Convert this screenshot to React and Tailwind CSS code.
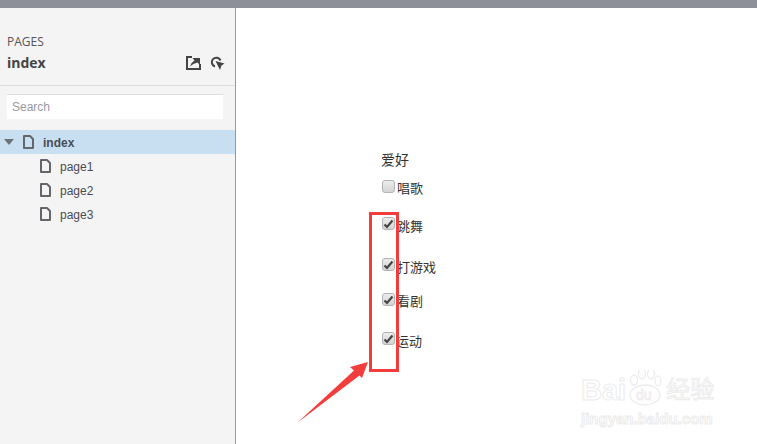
import React from 'react';

const pages = ['page1', 'page2', 'page3'];

const hobbies = [
  { label: '唱歌', checked: false, rowClass: 'mt-[12px]', labelClass: 'ml-[2px] mt-[1px]' },
  { label: '跳舞', checked: true, rowClass: 'mt-[20px]', labelClass: 'ml-[2px] mt-[2px]' },
  { label: '打游戏', checked: true, rowClass: 'mt-[23px]', labelClass: 'ml-[2px] mt-[2px]' },
  { label: '看剧', checked: true, rowClass: 'mt-[17px]', labelClass: 'ml-[2px] mt-[1px]' },
  { label: '运动', checked: true, rowClass: 'mt-[22px]', labelClass: 'ml-[1px] mt-[2px]' },
];

const PageIcon = () => (
  <svg width="11" height="14" viewBox="0 0 11 14" fill="none" className="shrink-0">
    <path d="M1 1h6l3 3v9H1z" stroke="#63666b" strokeWidth="2" strokeLinejoin="round" />
  </svg>
);

const Checkbox = ({ checked }) => (
  <span className="flex h-[13px] w-[13px] shrink-0 items-center justify-center rounded-[3px] border border-[#b4b4b4] bg-gradient-to-b from-[#ececec] to-[#d4d4d4]">
    {checked && (
      <svg width="11" height="10" viewBox="0 0 11 10" fill="none">
        <path d="M1.5 5.5 4 8l5.5-6.5" stroke="#444" strokeWidth="2.2" />
      </svg>
    )}
  </span>
);

export default function App() {
  return (
    <div className="relative flex h-[444px] w-[757px] flex-col overflow-hidden bg-white font-['Liberation_Sans','Noto_Sans_CJK_SC',sans-serif]">
      <div className="h-2 shrink-0 bg-[#8e9099]" />
      <div className="flex min-h-0 flex-1">
        {/* Sidebar */}
        <aside className="w-[236px] shrink-0 border-r border-[#97999e] bg-[#f4f4f4]">
          <div className="h-[78px] border-b border-[#dcdcdc] px-[7px] pt-[27px]">
            <div className="font-['Open_Sans',sans-serif] text-[12px] leading-[14px] text-[#555]">PAGES</div>
            <div className="mt-[4px] flex items-center justify-between pr-[3px]">
              <span className="font-['Open_Sans',sans-serif] text-[14px] font-bold leading-[20px] text-[#444]">index</span>
              <div className="flex items-center gap-[9px]">
                <svg width="15" height="14" viewBox="0 0 15 14" fill="none">
                  <path d="M6 1H1v12h13V8" stroke="#444" strokeWidth="2" />
                  <path d="M4 10.500Q5 6.500 8.500 4.500L6.500 2H14V9L11.500 6.500Q7 7.500 4 10.500z" fill="#444" />
                </svg>
                <svg width="15" height="15" viewBox="0 0 15 15" fill="none">
                  <path d="M5 10.500A4.500 4.500 0 1 1 10.500 4.500" stroke="#444" strokeWidth="2" />
                  <path d="M5.500 5 14.500 7.500 11.500 9.500 10 14z" fill="#444" />
                </svg>
              </div>
            </div>
          </div>
          <div className="px-[7px] pt-[8px]">
            <div className="flex h-[25px] w-[216px] items-center border-t border-[#dedede] bg-white pl-[5px] text-[12px] text-[#9a9aa0]">Search</div>
          </div>
          <div className="mt-[11px]">
            <div className="flex h-6 items-center bg-[#c7dff0]">
              <svg width="10" height="6" viewBox="0 0 10 6" className="ml-[4px]">
                <path d="M0 0h10L5 6z" fill="#6d7278" />
              </svg>
              <span className="ml-[9px]"><PageIcon /></span>
              <span className="ml-[9px] pt-[2px] text-[12px] font-bold text-[#4a4d55]">index</span>
            </div>
            {pages.map((page) => (
              <div key={page} className="flex h-6 items-center pl-[40px]">
                <PageIcon />
                <span className="ml-[9px] pt-[2px] text-[12px] text-[#4a4d55]">{page}</span>
              </div>
            ))}
          </div>
        </aside>

        {/* Form */}
        <main className="flex-1 pl-[145px] pt-[144px] text-[13px] leading-[16px] text-[#333]">
          <div className="text-[14px]">爱好</div>
          {hobbies.map((hobby) => (
            <div key={hobby.label} className={`flex items-start pl-[1px] ${hobby.rowClass}`}>
              <Checkbox checked={hobby.checked} />
              <span className={hobby.labelClass}>{hobby.label}</span>
            </div>
          ))}
        </main>
      </div>

      {/* Annotation */}
      <div className="absolute left-[369px] top-[212px] h-[160px] w-[30px] border-[3px] border-[#f23d3d]" />
      <svg className="absolute left-[290px] top-[355px]" width="85" height="75" viewBox="290 355 85 75">
        <path d="M297 423 354 370.500 350 367 368 362 362 378 359.500 375.500z" fill="#f23d3d" />
      </svg>

      {/* Watermark */}
      <div className="absolute left-[581px] top-[370px] flex w-[140px] flex-col items-start text-white [-webkit-text-stroke:1px_#ececec]">
        <div className="flex h-[36px] items-end">
          <span className="text-[29px] font-bold leading-[32px]">Bai</span>
          <svg width="38" height="36" viewBox="0 0 38 36" fill="none" stroke="#ececec" strokeWidth="1.300">
            <ellipse cx="19" cy="25" rx="15" ry="10" />
            <ellipse cx="8" cy="10" rx="3.500" ry="5" />
            <ellipse cx="16" cy="4" rx="3.500" ry="5" />
            <ellipse cx="25" cy="4" rx="3.500" ry="5" />
            <ellipse cx="32" cy="11" rx="3" ry="5" />
            <text x="10" y="30" fontSize="14" fontFamily="Liberation Sans" strokeWidth="0.800">du</text>
          </svg>
          <span className="ml-[2px] text-[24px] leading-[32px]">经验</span>
        </div>
        <span className="mt-[4px] text-[15px] font-bold leading-[17px]">jingyan.baidu.com</span>
      </div>
    </div>
  );
}
